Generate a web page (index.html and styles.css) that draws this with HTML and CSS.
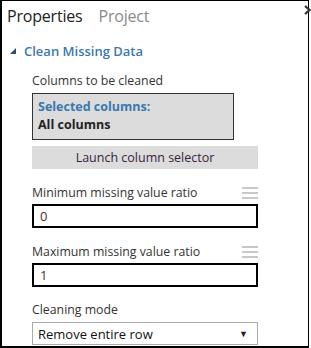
FILE: index.html
```html
<!DOCTYPE html>
<html>
<head>
<meta charset="utf-8">
<link rel="stylesheet" href="styles.css">
</head>
<body>
<div class="panel">
  <div class="tabs">
    <span class="tab active">Properties</span>
    <span class="tab">Project</span>
  </div>
  <svg class="collapse" width="7" height="10" viewBox="0 0 7 10"><path d="M1 1 L5.5 5 L1 9" fill="none" stroke="#333" stroke-width="2.2"/></svg>
  <div class="section-title"><span class="tri"></span>Clean Missing Data</div>
  <div class="fields">
    <div class="label first">Columns to be cleaned</div>
    <div class="selected">
      <div class="sel-head">Selected columns:</div>
      <div class="sel-val">All columns</div>
    </div>
    <div class="launch">Launch column selector</div>
    <div class="label-row"><span class="label">Minimum missing value ratio</span><span class="menu"><i></i><i></i><i></i></span></div>
    <div class="input">0</div>
    <div class="label-row"><span class="label">Maximum missing value ratio</span><span class="menu"><i></i><i></i><i></i></span></div>
    <div class="input">1</div>
    <div class="label mode">Cleaning mode</div>
    <div class="select"><span>Remove entire row</span><span class="arrow">&#9660;</span></div>
  </div>
</div>
</body>
</html>
```
FILE: styles.css
```css
* { box-sizing: border-box; }
body { margin: 0; font-family: "Open Sans", "Noto Sans", sans-serif; color: #333; background: #fff; }
.panel {
  position: relative;
  width: 309px; height: 348px;
  border-top: 1px solid #000; border-right: 1px solid #000;
  border-left: 2px solid #000; border-bottom: 2px solid #000;
  padding: 0 0 0 5px;
}
.tabs { display: flex; gap: 16px; height: 30px; align-items: center; font-size: 16px; letter-spacing: -0.2px; }
.tab { color: #8a8a8a; }
.tab.active { color: #222; }
.collapse { position: absolute; right: -3px; top: 4px; }
.section-title { display: flex; align-items: center; margin-top: 11px; margin-left: 3px; font-size: 13px; font-weight: 600; color: #3a78ad; }
.tri { width: 0; height: 0; border-left: 6px solid transparent; border-bottom: 6px solid #2d4f6e; margin-right: 8px; }
.fields { padding-left: 25px; width: 251px; }
.label { font-size: 12.3px; color: #333; }
.label.first { display: block; margin-top: 12px; }
.selected { margin-top: 4px; width: 202px; height: 47px; background: #dcdcdc; border: 1px solid #333; padding: 4px 5px; font-weight: 700; font-size: 12.5px; line-height: 18px; }
.sel-head { color: #3a78ad; }
.sel-val { color: #222; }
.launch { margin-top: 6px; height: 23px; background: #dcdcdc; text-align: center; font-size: 12.5px; line-height: 23px; color: #3a1c3e; }
.label-row { display: flex; justify-content: space-between; align-items: center; margin-top: 15px; }
.menu { display: flex; flex-direction: column; gap: 3px; width: 16px; }
.menu i { display: block; height: 2px; background: #c8c8c8; }
.input { margin-top: 3px; height: 24px; border: 2px solid #000; padding-left: 6px; font-size: 13px; line-height: 20px; color: #5a2a1a; }
.label.mode { display: block; margin-top: 14px; }
.select { margin-top: 4px; height: 23px; border: 1px solid #aaa; display: flex; justify-content: space-between; align-items: center; padding: 0 9px 0 5px; font-size: 13px; color: #111; }
.arrow { font-size: 9px; color: #222; }
```
